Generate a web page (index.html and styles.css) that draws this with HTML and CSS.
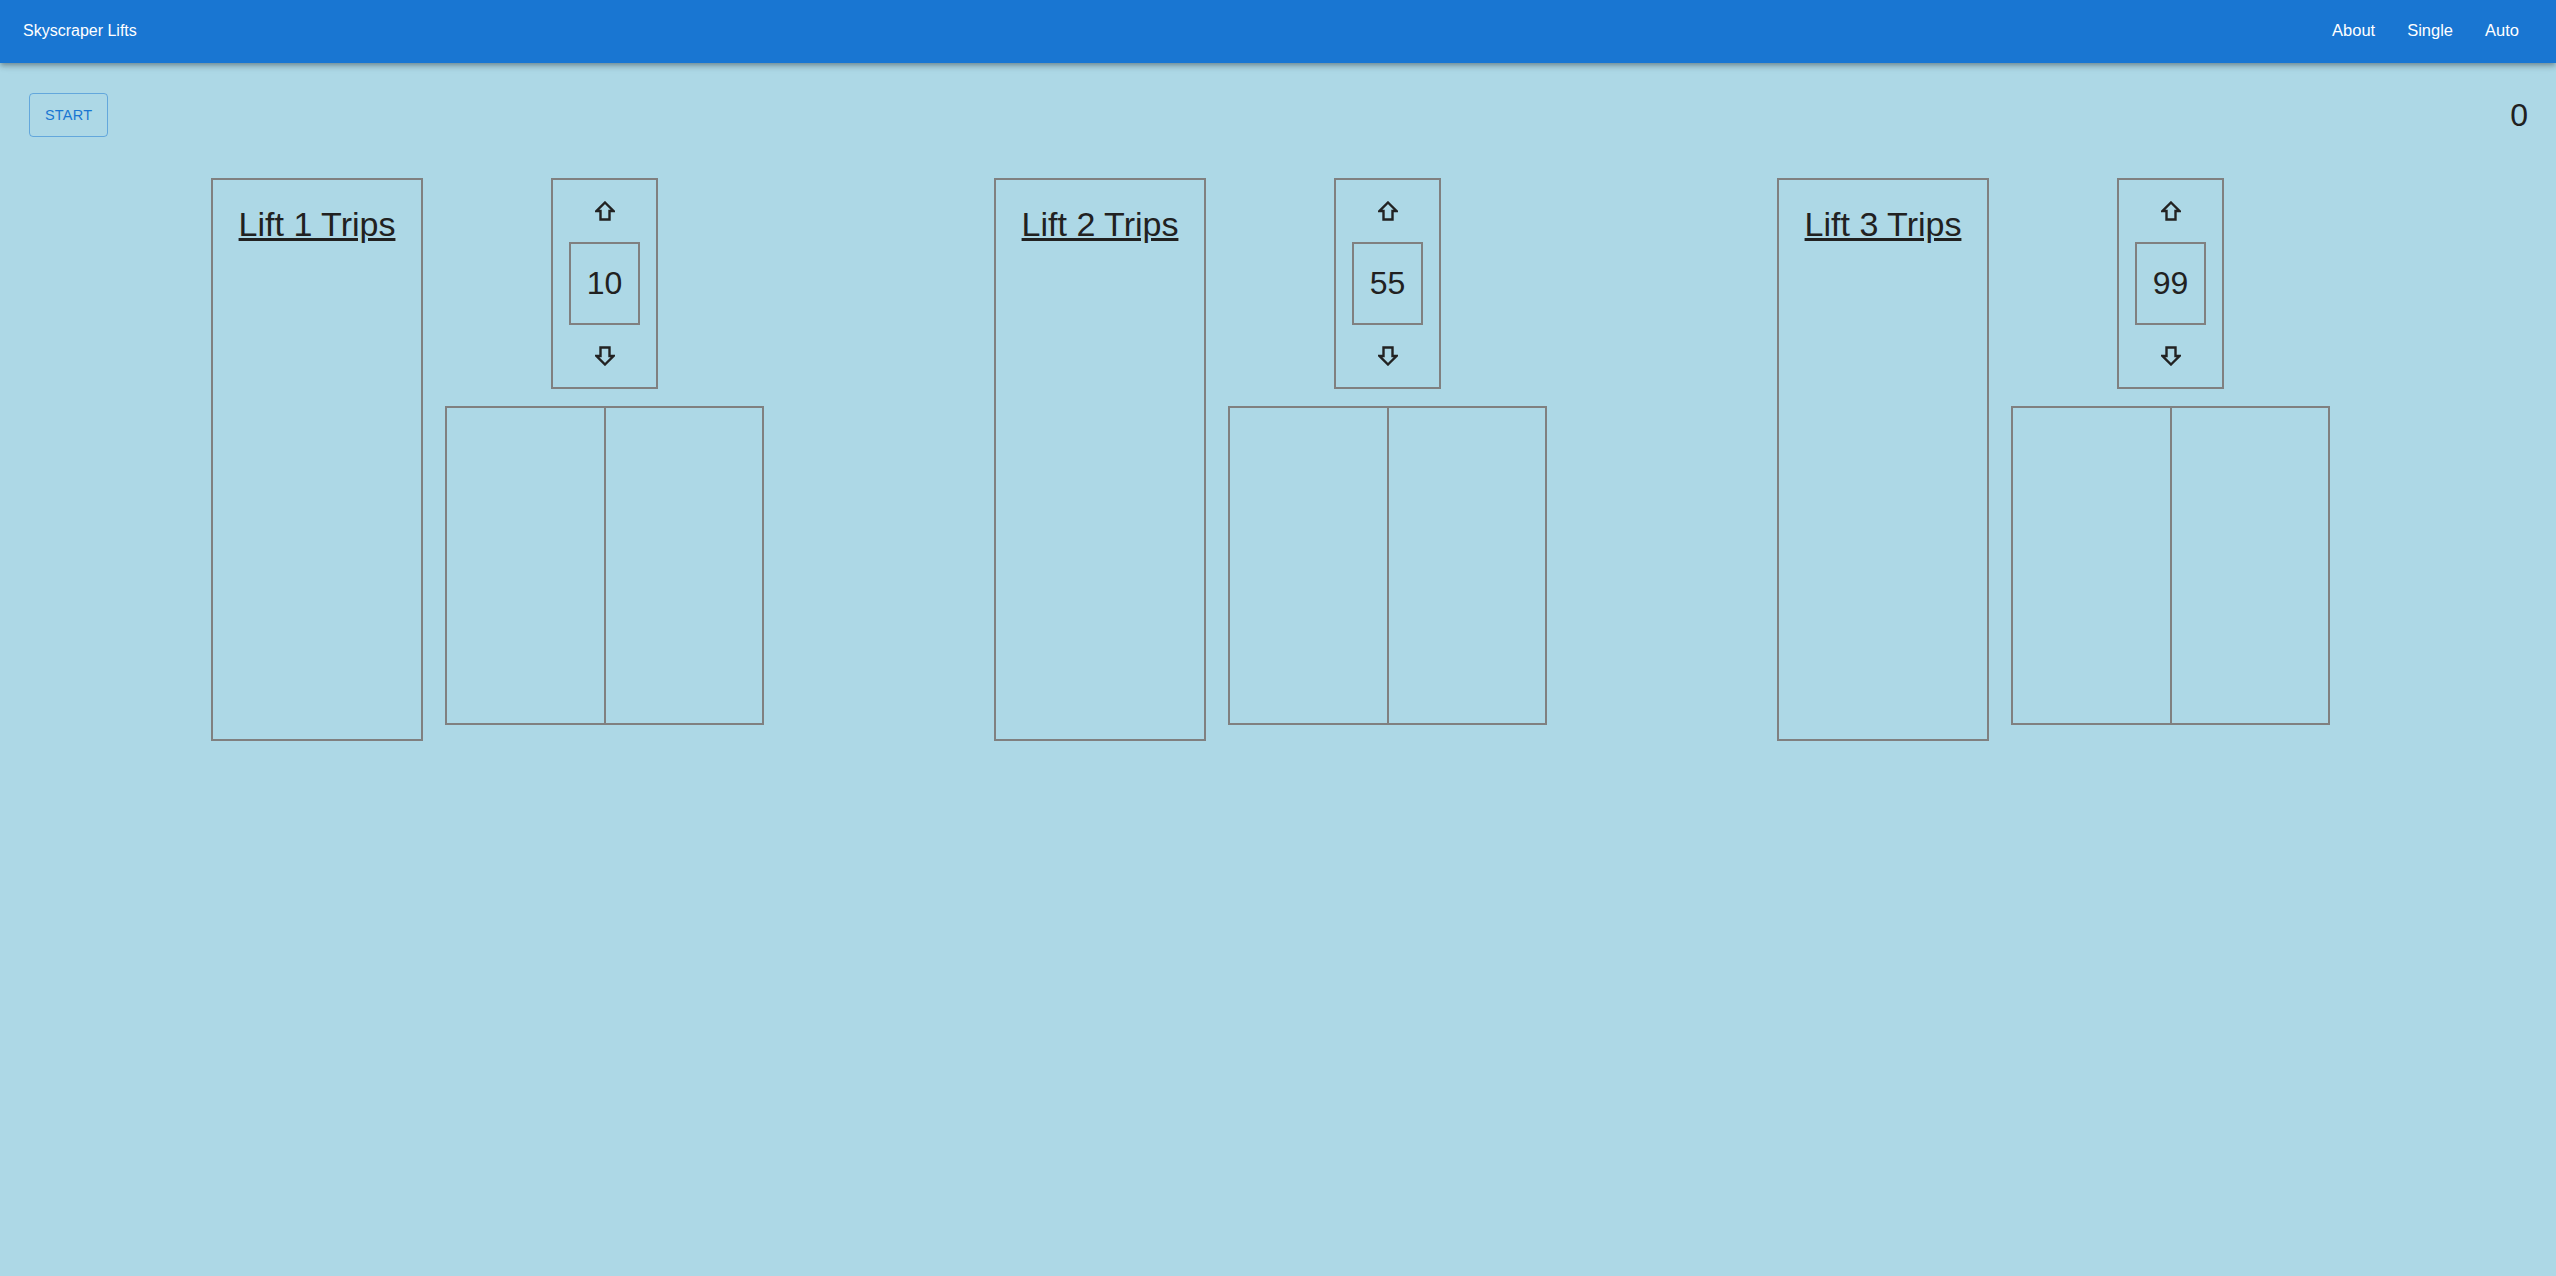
FILE: index.html
```html
<!DOCTYPE html>
<html lang="en">
<head>
<meta charset="utf-8">
<title>Skyscraper Lifts</title>
<link rel="stylesheet" href="styles.css">
</head>
<body>
<header class="appbar">
  <div class="appbar-title">Skyscraper Lifts</div>
  <nav class="appbar-nav">
    <a class="nav-link" href="#">About</a>
    <a class="nav-link" href="#">Single</a>
    <a class="nav-link" href="#">Auto</a>
  </nav>
</header>

<main class="content">
  <div class="toprow">
    <button class="btn-outlined" type="button">START</button>
    <div class="counter">0</div>
  </div>

  <div class="lifts">
    <section class="lift">
      <div class="trips"><h4 class="trips-title">Lift 1 Trips</h4></div>
      <div class="shaft">
        <div class="controls">
          <div class="arrow-row">
            <svg class="arrow" viewBox="0 0 20 20" width="20" height="20"><path d="M10 1.5 L18.5 10 H14.5 V18.5 H5.5 V10 H1.5 Z"/></svg>
          </div>
          <div class="floor">10</div>
          <div class="arrow-row">
            <svg class="arrow" viewBox="0 0 20 20" width="20" height="20"><path d="M10 18.5 L18.5 10 H14.5 V1.5 H5.5 V10 H1.5 Z"/></svg>
          </div>
        </div>
        <div class="doors"><div class="door"></div><div class="door"></div></div>
      </div>
    </section>

    <section class="lift">
      <div class="trips"><h4 class="trips-title">Lift 2 Trips</h4></div>
      <div class="shaft">
        <div class="controls">
          <div class="arrow-row">
            <svg class="arrow" viewBox="0 0 20 20" width="20" height="20"><path d="M10 1.5 L18.5 10 H14.5 V18.5 H5.5 V10 H1.5 Z"/></svg>
          </div>
          <div class="floor">55</div>
          <div class="arrow-row">
            <svg class="arrow" viewBox="0 0 20 20" width="20" height="20"><path d="M10 18.5 L18.5 10 H14.5 V1.5 H5.5 V10 H1.5 Z"/></svg>
          </div>
        </div>
        <div class="doors"><div class="door"></div><div class="door"></div></div>
      </div>
    </section>

    <section class="lift">
      <div class="trips"><h4 class="trips-title">Lift 3 Trips</h4></div>
      <div class="shaft">
        <div class="controls">
          <div class="arrow-row">
            <svg class="arrow" viewBox="0 0 20 20" width="20" height="20"><path d="M10 1.5 L18.5 10 H14.5 V18.5 H5.5 V10 H1.5 Z"/></svg>
          </div>
          <div class="floor">99</div>
          <div class="arrow-row">
            <svg class="arrow" viewBox="0 0 20 20" width="20" height="20"><path d="M10 18.5 L18.5 10 H14.5 V1.5 H5.5 V10 H1.5 Z"/></svg>
          </div>
        </div>
        <div class="doors"><div class="door"></div><div class="door"></div></div>
      </div>
    </section>
  </div>
</main>
</body>
</html>
```

FILE: styles.css
```css
* {
  box-sizing: border-box;
}

html, body {
  margin: 0;
  padding: 0;
}

body {
  background: #add8e6;
  font-family: "Liberation Sans", Arial, Helvetica, sans-serif;
  color: #212121;
  min-height: 1276px;
}

.appbar {
  height: 63px;
  background: #1976d2;
  color: #ffffff;
  display: flex;
  align-items: center;
  justify-content: space-between;
  padding: 0 21px 0 23px;
  box-shadow: 0px 2px 4px -1px rgba(0,0,0,0.2), 0px 4px 5px 0px rgba(0,0,0,0.14), 0px 1px 10px 0px rgba(0,0,0,0.12);
  position: relative;
  z-index: 2;
}

.appbar-title {
  font-size: 16px;
  line-height: 20px;
  margin-top: -2px;
}

.appbar-nav {
  display: flex;
  align-items: center;
  margin-top: -3px;
}

.nav-link {
  color: #ffffff;
  text-decoration: none;
  font-size: 16.5px;
  line-height: 20px;
  padding: 0 16px;
}

.toprow {
  display: flex;
  align-items: center;
  justify-content: space-between;
  padding: 30px 28px 0 29px;
}

.btn-outlined {
  height: 44px;
  padding: 0 15px;
  border: 1px solid rgba(25,118,210,0.5);
  border-radius: 4px;
  background: transparent;
  color: #1976d2;
  font-family: "Liberation Sans", Arial, Helvetica, sans-serif;
  font-size: 14.5px;
  letter-spacing: 0.2px;
  display: flex;
  align-items: center;
  justify-content: center;
}

.counter {
  font-size: 32px;
  line-height: 37px;
}

.lifts {
  display: flex;
  padding-left: 211px;
  margin-top: 41px;
}

.lift {
  width: 783px;
  flex: none;
  display: flex;
  align-items: flex-start;
  gap: 22px;
}

.trips {
  width: 212px;
  height: 563px;
  border: 2px solid #808080;
  padding-top: 24px;
  text-align: center;
}

.trips-title {
  margin: 0;
  font-size: 34px;
  font-weight: 400;
  line-height: 40px;
  text-decoration: underline;
  color: #212121;
}

.shaft {
  width: 319px;
  display: flex;
  flex-direction: column;
  align-items: center;
  gap: 17px;
}

.controls {
  width: 107px;
  height: 211px;
  border: 2px solid #808080;
  padding: 0 16px;
  display: flex;
  flex-direction: column;
  align-items: center;
}

.arrow-row {
  height: 62px;
  display: flex;
  align-items: center;
  justify-content: center;
}

.arrow {
  display: block;
  fill: none;
  stroke: #222222;
  stroke-width: 2.4;
  stroke-linejoin: miter;
}

.floor {
  width: 71px;
  height: 83px;
  border: 2px solid #808080;
  display: flex;
  align-items: center;
  justify-content: center;
  font-size: 32px;
  color: #212121;
}

.doors {
  width: 319px;
  height: 319px;
  border: 2px solid #808080;
  display: flex;
}

.door {
  flex: 1;
}

.door + .door {
  border-left: 2px solid #808080;
}
```
